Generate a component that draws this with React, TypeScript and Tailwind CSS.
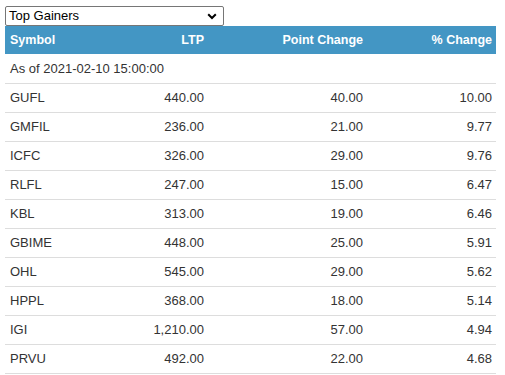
import React from "react";

const rows: [string, string, string, string][] = [
  ["GUFL", "440.00", "40.00", "10.00"],
  ["GMFIL", "236.00", "21.00", "9.77"],
  ["ICFC", "326.00", "29.00", "9.76"],
  ["RLFL", "247.00", "15.00", "6.47"],
  ["KBL", "313.00", "19.00", "6.46"],
  ["GBIME", "448.00", "25.00", "5.91"],
  ["OHL", "545.00", "29.00", "5.62"],
  ["HPPL", "368.00", "18.00", "5.14"],
  ["IGI", "1,210.00", "57.00", "4.94"],
  ["PRVU", "492.00", "22.00", "4.68"],
];

export default function App() {
  return (
    <div
      className="w-[505px] h-[375px] bg-white pt-[6px] pl-[5px] text-[13px] text-[#333]"
      style={{ fontFamily: '"Liberation Sans", Arial, sans-serif' }}
    >
      <div className="w-[219px] h-[20px] border border-[#767676] rounded-[2px] flex items-center justify-between pl-[3px] pr-[6px] text-black text-[13px]">
        <span>Top Gainers</span>
        <svg width="10" height="7" viewBox="0 0 10 7" fill="none">
          <path d="M1.2 1.2 L5 5 L8.8 1.2" stroke="#000" strokeWidth="2" />
        </svg>
      </div>
      <div className="w-[491px]">
        <div className="grid grid-cols-[100px_104px_159px_128px] h-[28px] items-center bg-[#4396c4] text-white font-bold text-[12.5px]">
          <div className="pl-[5px]">Symbol</div>
          <div className="text-right pr-[5px]">LTP</div>
          <div className="text-right pr-[5px]">Point Change</div>
          <div className="text-right pr-[4px]">% Change</div>
        </div>
        <div className="h-[30px] flex items-center border-b border-[#dddddd] pl-[5px]">
          As of 2021-02-10 15:00:00
        </div>
        {rows.map((r) => (
          <div
            key={r[0]}
            className="grid grid-cols-[100px_104px_159px_128px] h-[29px] items-center border-b border-[#dddddd]"
          >
            <div className="pl-[5px]">{r[0]}</div>
            <div className="text-right pr-[5px]">{r[1]}</div>
            <div className="text-right pr-[5px]">{r[2]}</div>
            <div className="text-right pr-[4px]">{r[3]}</div>
          </div>
        ))}
      </div>
    </div>
  );
}
